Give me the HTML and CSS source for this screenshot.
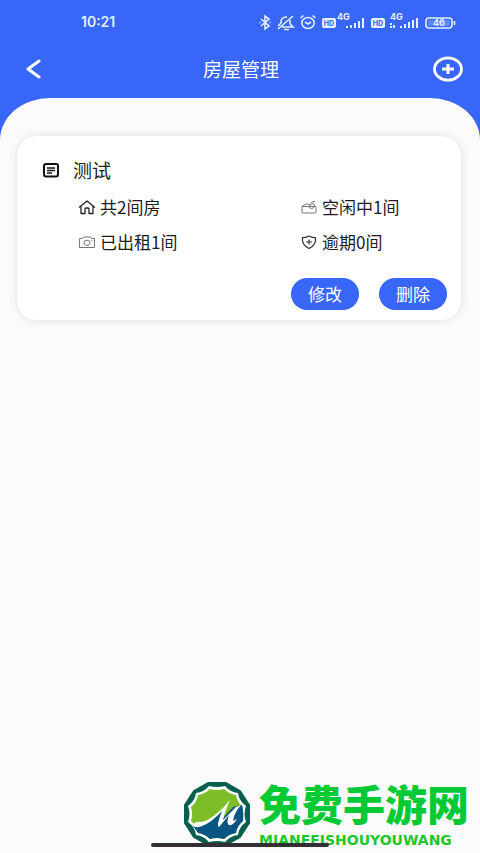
FILE: index.html
```html
<!DOCTYPE html>
<html lang="zh-CN">
<head>
<meta charset="utf-8">
<meta name="viewport" content="width=device-width, initial-scale=1">
<title>房屋管理</title>
<link rel="stylesheet" href="styles.css">
</head>
<body>
<div class="status">
  <time class="clock">10:21</time>
  <svg class="status-icons" width="200" height="20" viewBox="0 0 200 20" fill="none" stroke="#e4f1ff" stroke-width="1.600" aria-hidden="true">
    <path d="M3 7l8 7-4 3V4l4 3-8 7M1.500 10.500h1M11.500 10.500h1"/>
    <path d="M20 14l3-3V9q1-4 6-4M32 8v4l3 3H24M20 17L35 4M26 17.500h5"/>
    <ellipse cx="50" cy="11" rx="6.200" ry="5.500"/><path d="M47 10l3 2 3-2M42.500 6l3-2.500M57.500 6l-3-2.500"/>
    <rect class="chip" x="64" y="6" width="14" height="10" rx="2"/>
    <text class="chip-text" x="71" y="13.500">HD</text>
    <text class="net-text" x="79" y="8">4G</text>
    <path d="M89 16v-2M93 16v-3M97 16v-5M101 16V9M105 16V6" stroke-width="2"/>
    <rect class="chip" x="113" y="6" width="14" height="10" rx="2"/>
    <text class="chip-text" x="120" y="13.500">HD</text>
    <text class="net-text" x="132" y="8">4G</text>
    <path d="M133 11v2M133 14v2M136 13v3M143 16v-2M147 16v-4M151 16v-6M155 16V8M159 16V6" stroke-width="2"/>
    <rect x="168" y="6" width="26" height="10" rx="3"/><path d="M196.500 9v4"/>
    <rect class="charge" x="170" y="8" width="22" height="6" rx="1"/>
    <text class="battery-text" x="181" y="14">46</text>
  </svg>
</div>
<header class="nav">
  <button class="nav-btn" type="button" aria-label="返回">
    <svg width="16" height="22" viewBox="0 0 16 22" fill="none" stroke="#fff" stroke-width="3" stroke-linecap="round" stroke-linejoin="round"><path d="M13 3L2 11l11 8"/></svg>
  </button>
  <h1 class="title">房屋管理</h1>
  <button class="nav-btn" type="button" aria-label="添加">
    <svg width="32" height="26" viewBox="0 0 32 26" fill="none" stroke="#fff"><ellipse cx="16" cy="13" rx="13.500" ry="11.200" stroke-width="2.800"/><path d="M10 13h12M16 8v10" stroke-width="3"/></svg>
  </button>
</header>
<main class="sheet">
  <article class="card">
    <div class="card-head">
      <svg width="16" height="16" viewBox="0 0 16 16" fill="none" stroke="#111" aria-hidden="true"><rect x="1" y="2" width="14" height="12.500" rx="2" stroke-width="2"/><path d="M4 6h8M4 8.500h8M4 11h5" stroke-width="1.400"/></svg>
      <h2 class="name">测试</h2>
    </div>
    <ul class="stats">
      <li class="stat"><svg width="18" height="16" viewBox="0 0 18 16" fill="none" stroke="#222" stroke-width="1.300" stroke-linejoin="round" aria-hidden="true"><path d="M1 8.500L9 2l8 6.500M3 7v7.500h4V10q0-1 1-1h2q1 0 1 1v4.500h4V7"/></svg>共2间房</li>
      <li class="stat"><svg width="18" height="16" viewBox="0 0 18 16" fill="none" stroke="#777" aria-hidden="true"><path d="M2 7.500h13q1 0 1 1V13q0 1-1 1H3q-1 0-1-1zM2 7.500l4-2.500 4 .5M9 7.500q0 2 2.500 2t2.500-2M10 7q0-2 2-2.500 2-.5 3 2.500M11 4l2-1.500M13 2.500h2"/></svg>空闲中1间</li>
      <li class="stat"><svg width="18" height="16" viewBox="0 0 18 16" fill="none" stroke="#777" aria-hidden="true"><path d="M1.500 4.500h3l1-1.500h7l1 1.500h3v9h-15z"/><ellipse cx="9" cy="8.800" rx="3" ry="2.600"/><path d="M13.500 6.500h1"/></svg>已出租1间</li>
      <li class="stat"><svg width="18" height="16" viewBox="0 0 18 16" fill="none" stroke="#333" stroke-width="1.200" stroke-linejoin="round" aria-hidden="true"><path d="M9 2q3 2 6.500 1.500 1 7.500-6.500 11Q1.500 11 2.500 3.500 6 4 9 2z"/><path d="M6 8h6M9 5.500v5"/></svg>逾期0间</li>
    </ul>
    <div class="actions">
      <button class="pill" type="button">修改</button>
      <button class="pill" type="button">删除</button>
    </div>
  </article>
  <footer class="brand">
    <svg class="logo" width="68" height="66" viewBox="0 0 68 66" stroke-linejoin="round" aria-hidden="true">
      <path d="M25 2h18l14 8 9 14v18l-9 14-14 8H25l-14-8-9-14V24l9-14z" fill="#07604f" stroke="#07604f" stroke-width="2"/>
      <path d="M26 5q8 2 16 0 5 6 13 7 1 8 8 13-3 8 0 16-7 5-8 13-8 1-13 7-8-2-16 0-5-6-13-7-1-8-8-13 3-8 0-16 7-5 8-13 8-1 13-7z" fill="#fff"/>
      <path d="M27 8q7 2 14 0 5 5 12 6 1 7 7 12-2 7 0 14-6 5-7 12-7 1-12 6-7-2-14 0-5-5-12-6-1-7-7-12 2-7 0-14 6-5 7-12 7-1 12-6z" fill="#7cbd28"/>
      <path d="M10 45q18-2 32-21l-4 15 12-13 9-2q2 9 1 16-6 5-7 12-7 1-12 6-7-2-14 0-5-5-12-6z" fill="#075582"/>
      <path d="M9 44q4-4 9-3 12-2 29-22-5 11-7 20l13-13 5-2q-7 8-8 16l4-2q-4 7-8 6-3-2 0-10L36 46q-3-1 3-16-11 12-20 15-6 3-10-1z" fill="#fff"/>
    </svg>
    <div class="brand-text">
      <span class="brand-cn">免费手游网</span>
      <span class="brand-en">MIANFEISHOUYOUWANG</span>
    </div>
  </footer>
</main>
<div class="home-bar"></div>
</body>
</html>
```
FILE: styles.css
```css
* {
  box-sizing: border-box;
  margin: 0;
  padding: 0;
}

body {
  display: flex;
  flex-direction: column;
  min-height: 100vh;
  background: #3766f8;
  color: #1c1c1c;
  font-family: "Noto Sans CJK SC", sans-serif;
}

button {
  border: 0;
  background: none;
  color: inherit;
  font: inherit;
}

.status {
  display: flex;
  align-items: center;
  justify-content: space-between;
  height: 44px;
  padding: 0 22px 0 81px;
}

.clock {
  color: #e4f1ff;
  font: 600 14px/20px Inter, sans-serif;
}

.status-icons text {
  fill: #e4f1ff;
  stroke: none;
  font-family: Inter, sans-serif;
  font-weight: 700;
}

.status-icons .chip {
  fill: #e4f1ff;
  stroke: none;
}

.status-icons .charge {
  fill: #5c86fa;
  stroke: none;
}

.status-icons .chip-text {
  fill: #3766f8;
  font-size: 7px;
  text-anchor: middle;
}

.status-icons .net-text {
  font-size: 9px;
}

.status-icons .battery-text {
  font-size: 9px;
  text-anchor: middle;
}

.nav {
  display: flex;
  align-items: center;
  justify-content: space-between;
  height: 54px;
  padding: 0 16px 4px 18px;
}

.nav-btn {
  display: flex;
  align-items: center;
  justify-content: center;
  width: 32px;
  height: 32px;
}

.title {
  color: #fff;
  font-size: 19px;
  font-weight: 400;
  line-height: 30px;
}

.sheet {
  display: flex;
  flex: 1;
  flex-direction: column;
  padding: 38px 19px 6px 17px;
  border-radius: 50px 50px 0 0 / 42px 42px 0 0;
  background: #fbfbfb;
}

.card {
  padding: 20px 14px 10px 26px;
  border-radius: 20px;
  background: #fff;
  box-shadow: 0 0 10px rgba(0, 0, 0, 0.12);
}

.card-head {
  display: flex;
  align-items: center;
  gap: 14px;
}

.name {
  font-size: 19px;
  font-weight: 400;
  line-height: 28px;
}

.stats {
  display: grid;
  grid-template-columns: 222px 1fr;
  row-gap: 11px;
  margin-top: 11px;
  padding: 0 0 12px 35px;
  list-style: none;
}

.stat {
  display: flex;
  align-items: center;
  gap: 4px;
  font-size: 17px;
  line-height: 24px;
}

.actions {
  display: flex;
  justify-content: flex-end;
  gap: 20px;
  padding-top: 12px;
}

.pill {
  width: 68px;
  height: 32px;
  border-radius: 16px;
  background: #3766f8;
  color: #fff;
  font-size: 17px;
  line-height: 32px;
}

.brand {
  display: flex;
  align-items: flex-end;
  align-self: flex-end;
  gap: 8px;
  margin: auto -8px 0 0;
}

.brand-text {
  display: flex;
  flex-direction: column;
  gap: 4px;
}

.brand-cn {
  color: #05ca35;
  font-size: 42px;
  font-weight: 900;
  line-height: 52px;
}

.brand-en {
  color: #1fc62c;
  font: bold 14px/14px "DejaVu Sans", sans-serif;
}

.home-bar {
  position: absolute;
  bottom: 6px;
  left: 50%;
  width: 178px;
  height: 4px;
  border-radius: 2px;
  background: #342f32;
  transform: translateX(-50%);
}
```
